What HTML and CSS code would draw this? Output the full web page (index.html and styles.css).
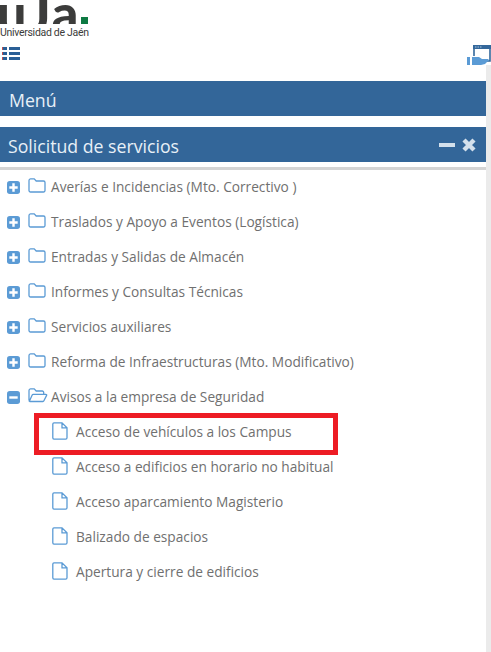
FILE: index.html
```html
<!DOCTYPE html>
<html lang="es">
<head>
<meta charset="utf-8">
<title>Solicitud de servicios</title>
<link rel="stylesheet" href="styles.css">
</head>
<body>
<div class="page">
  <header class="top">
    <div class="logo">
      <div class="logo-mark"><span class="logo-letters">uJa</span><span class="logo-dot"></span></div>
      <div class="logo-name">Universidad de Jaén</div>
    </div>
    <div class="tools">
      <svg class="list-icon" width="19" height="14" viewBox="0 0 19 14">
        <path fill="#2a5f96" d="M7 0h11v3H7zM7 5h11v3H7zM7 10h11v3H7z"/>
        <path fill="#2a5f96" d="M1 0h4v3H1zM1 5h4v3H1zM1 10h4v3H1z"/>
        <path fill="#c0504d" d="M0 0h1v3H0zM0 5h1v3H0zM0 10h1v3H0z"/>
      </svg>
      <svg class="screen-icon" width="24" height="21" viewBox="0 0 24 21">
        <path fill="none" stroke="#34689b" stroke-width="1.600" d="M7 11V1h16v15h-4"/>
        <path fill="#34689b" d="M6 0h18v4H6z"/>
        <path fill="#a9c4de" d="M8 1.500h1.500v1H8zM10.500 1.500H12v1h-1.500zM13 1.500h1.500v1H13z"/>
        <path fill="#5b9bd5" d="M0 12h3v8H0zM5 12h7l3 2h6l1 1-4 4-4 1H5z"/>
      </svg>
    </div>
  </header>

  <section class="bar bar-menu"><h2 class="bar-title">Menú</h2></section>

  <section class="bar bar-services">
    <h2 class="bar-title">Solicitud de servicios</h2>
    <div class="bar-actions">
      <svg width="16" height="12" viewBox="0 0 16 12"><path fill="#d3e0ec" d="M0 4h16v4H0z"/></svg>
      <svg width="14" height="14" viewBox="0 0 14 14"><path stroke="#d3e0ec" stroke-width="4.400" d="M2 2l10 10M12 2L2 12"/></svg>
    </div>
  </section>
  <div class="rule"></div>

  <ul class="tree">
    <li class="node"><svg class="toggle"><use href="#plus"/></svg><svg class="folder"><use href="#folder"/></svg><span>Averías e Incidencias (Mto. Correctivo )</span></li>
    <li class="node"><svg class="toggle"><use href="#plus"/></svg><svg class="folder"><use href="#folder"/></svg><span>Traslados y Apoyo a Eventos (Logística)</span></li>
    <li class="node"><svg class="toggle"><use href="#plus"/></svg><svg class="folder"><use href="#folder"/></svg><span>Entradas y Salidas de Almacén</span></li>
    <li class="node"><svg class="toggle"><use href="#plus"/></svg><svg class="folder"><use href="#folder"/></svg><span>Informes y Consultas Técnicas</span></li>
    <li class="node"><svg class="toggle"><use href="#plus"/></svg><svg class="folder"><use href="#folder"/></svg><span>Servicios auxiliares</span></li>
    <li class="node"><svg class="toggle"><use href="#plus"/></svg><svg class="folder"><use href="#folder"/></svg><span>Reforma de Infraestructuras (Mto. Modificativo)</span></li>
    <li class="node node-open"><svg class="toggle"><use href="#minus"/></svg><svg class="folder"><use href="#folder-open"/></svg><span>Avisos a la empresa de Seguridad</span></li>
    <li class="leaf"><svg class="file"><use href="#file"/></svg><span>Acceso de vehículos a los Campus</span><div class="highlight"></div></li>
    <li class="leaf"><svg class="file"><use href="#file"/></svg><span>Acceso a edificios en horario no habitual</span></li>
    <li class="leaf"><svg class="file"><use href="#file"/></svg><span>Acceso aparcamiento Magisterio</span></li>
    <li class="leaf"><svg class="file"><use href="#file"/></svg><span>Balizado de espacios</span></li>
    <li class="leaf"><svg class="file"><use href="#file"/></svg><span>Apertura y cierre de edificios</span></li>
  </ul>
  <div class="rail"></div>
</div>

<svg class="defs" width="0" height="0">
  <symbol id="plus" viewBox="0 0 14 14"><rect width="14" height="14" rx="3" fill="#5b9bd5"/><path fill="#fff" d="M2.500 5.700h3.200V2.500h2.600v3.200h3.200v2.600H8.300v3.200H5.700V8.300H2.500z"/></symbol>
  <symbol id="minus" viewBox="0 0 14 14"><rect width="14" height="14" rx="3" fill="#5b9bd5"/><path fill="#fff" d="M2.500 5.700h9v2.600h-9z"/></symbol>
  <symbol id="folder" viewBox="0 0 18 15"><path fill="none" stroke="#5b9bd5" stroke-width="1.300" d="M2.500.9h3.700l2 2.100h7.300a1.500 1.500 0 0 1 1.500 1.500v8a1.500 1.500 0 0 1-1.500 1.500h-13A1.500 1.500 0 0 1 1 12.500v-10A1.600 1.600 0 0 1 2.500.9z"/></symbol>
  <symbol id="folder-open" viewBox="0 0 20 15"><path fill="none" stroke="#5b9bd5" stroke-width="1.300" d="M1 12.500v-10A1.600 1.600 0 0 1 2.500.9h3.700l2 2.100h6a1.500 1.500 0 0 1 1.500 1.500V6.300M1.200 13.500l3-6.500a1.200 1.200 0 0 1 1-.7h12.600c.7 0 1.100.5.800 1.100l-2.700 5.400a1.200 1.200 0 0 1-1 .7H2.300a1 1 0 0 1-1.100-.7z"/></symbol>
  <symbol id="file" viewBox="0 0 16 18"><path fill="none" stroke="#5b9bd5" stroke-width="1.300" d="M2 .8h8l5 5v10a1.300 1.300 0 0 1-1.300 1.300H2A1.300 1.300 0 0 1 .8 15.800V2A1.300 1.300 0 0 1 2 .8zM10 .8v5h5"/></symbol>
</svg>
</body>
</html>
```

FILE: styles.css
```css
* { box-sizing: border-box; }

html, body {
  margin: 0;
  padding: 0;
  background: #fff;
  overflow: hidden;
}

body {
  font-family: "Open Sans", sans-serif;
  color: #707070;
}

.page {
  position: relative;
  width: 491px;
  height: 652px;
  overflow: hidden;
}

.rail {
  position: absolute;
  left: 486px;
  top: 65px;
  bottom: 0;
  width: 5px;
  background: #ebebeb;
}

.top {
  height: 81px;
  display: flex;
  justify-content: space-between;
  align-items: flex-start;
}

.logo-mark {
  height: 24px;
  display: flex;
  align-items: flex-end;
  overflow: hidden;
}

.logo-letters {
  font-family: "Lato", sans-serif;
  font-weight: 900;
  font-size: 52px;
  line-height: 24px;
  letter-spacing: 2px;
  color: #3c3c3b;
  margin-left: -3px;
  height: 24px;
  position: relative;
  top: 0;
}

.logo-dot {
  width: 7px;
  height: 7px;
  background: #0e7a43;
  margin-left: 1px;
  flex: none;
}

.logo-name {
  font-family: "Roboto", sans-serif;
  font-size: 10.500px;
  line-height: 12px;
  letter-spacing: -0.300px;
  color: #3c3c3b;
  margin-top: 3px;
  white-space: nowrap;
}

.tools { display: contents; }

.list-icon {
  position: absolute;
  left: 2px;
  top: 47px;
}

.screen-icon {
  position: absolute;
  left: 467px;
  top: 45px;
}

.bar {
  height: 35px;
  width: 486px;
  background: #336699;
  color: #e8f0f7;
  display: flex;
  align-items: center;
  justify-content: space-between;
  padding: 0 7px 0 9px;
}

.bar-title {
  margin: 2px 0 0;
  font-size: 17.700px;
  font-weight: 400;
  line-height: 24px;
}

.bar-services { margin-top: 11px; padding-left: 8px; }

.bar-actions {
  display: flex;
  align-items: center;
  gap: 7px;
  margin-right: 3px;
}

.rule {
  height: 3px;
  width: 486px;
  margin-top: 5px;
  background: #d4d4d4;
}

.tree {
  list-style: none;
  margin: -1px 0 0;
  padding: 0;
  font-size: 13.700px;
  line-height: 35px;
}

.node, .leaf {
  height: 35px;
  display: flex;
  align-items: center;
  white-space: nowrap;
}

.node { padding-left: 7px; }

.leaf { padding-left: 52px; position: relative; }

.toggle { width: 13px; height: 13px; flex: none; margin: 2px 8px 0 0; }

.folder { width: 18px; height: 15px; flex: none; margin: -2px 5px 0 0; }

.node-open .folder { width: 20px; margin-right: 3px; }

.file { width: 16px; height: 18px; flex: none; margin: -2px 8px 0 0; }

.highlight {
  position: absolute;
  left: 34px;
  top: -1px;
  width: 304px;
  height: 42px;
  border: 5px solid #ed1c24;
}

.defs { position: absolute; }
```
